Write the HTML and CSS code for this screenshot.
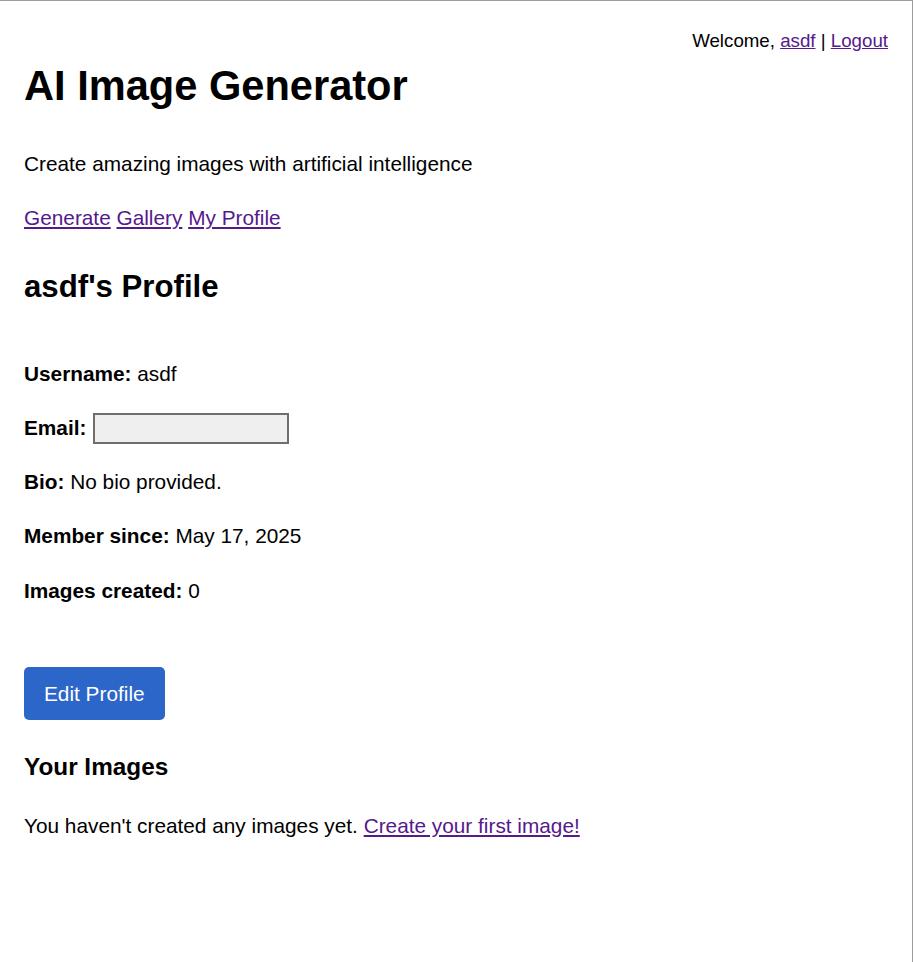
FILE: index.html
```
<!DOCTYPE html>
<html lang="en">
<head>
<meta charset="utf-8">
<title>AI Image Generator - asdf's Profile</title>
<link rel="stylesheet" href="styles.css">
</head>
<body>
<div class="page">
  <div class="user-info">Welcome, <a href="#">asdf</a> | <a href="#">Logout</a></div>
  <h1 class="title">AI Image Generator</h1>
  <p>Create amazing images with artificial intelligence</p>
  <p class="nav"><a href="#">Generate</a> <a href="#">Gallery</a> <a href="#">My Profile</a></p>

  <h2 class="profile-title">asdf's Profile</h2>
  <div class="profile-info">
    <p><strong>Username:</strong> asdf</p>
    <p><strong>Email:</strong> <input class="email-field" type="email" disabled></p>
    <p><strong>Bio:</strong> No bio provided.</p>
    <p><strong>Member since:</strong> May 17, 2025</p>
    <p><strong>Images created:</strong> 0</p>
  </div>
  <div class="actions">
    <a class="btn" href="#">Edit Profile</a>
  </div>
  <h3 class="section-title">Your Images</h3>
  <p>You haven't created any images yet. <a href="#">Create your first image!</a></p>
</div>
</body>
</html>
```
FILE: styles.css
```
html, body {
  margin: 0;
  padding: 0;
  background: #ffffff;
}

body {
  font-family: "Liberation Sans", Arial, Helvetica, sans-serif;
  font-size: 20.8px;
  line-height: 1.6;
  color: #000000;
}

.page {
  box-sizing: border-box;
  width: 913px;
  min-height: 962px;
  border-top: 1px solid #9c9c9c;
  border-right: 1px solid #9c9c9c;
  padding: 22px 24px 0 24px;
}

a {
  color: #551a8b;
  text-decoration: underline;
}

p {
  margin: 20.8px 0;
}

.user-info {
  float: right;
  font-size: 18.72px;
  margin-top: 2.5px;
}

.title {
  font-size: 41.6px;
  font-weight: bold;
  margin: 30px 0 27.5px;
}

.profile-title {
  font-size: 31.2px;
  font-weight: bold;
  margin: 28px 0 22px;
}

.profile-info {
  margin-top: 45px;
}

.email-field {
  box-sizing: border-box;
  width: 196px;
  height: 31px;
  margin: 2px 0 0 1px;
  padding: 0 4px;
  vertical-align: top;
  border: 2px solid #6e6e6e;
  background: #efefef;
  font: inherit;
  font-size: 17px;
}

.actions {
  display: flex;
  margin: 60.6px 0 26px;
}

.btn {
  display: inline-block;
  padding: 10px 20px;
  line-height: 33px;
  background: #2c66c9;
  color: #ffffff;
  text-decoration: none;
  border-radius: 5px;
  font-size: 20.8px;
}

.section-title {
  font-size: 24.34px;
  font-weight: bold;
  margin: 28px 0 21.2px;
}
```
